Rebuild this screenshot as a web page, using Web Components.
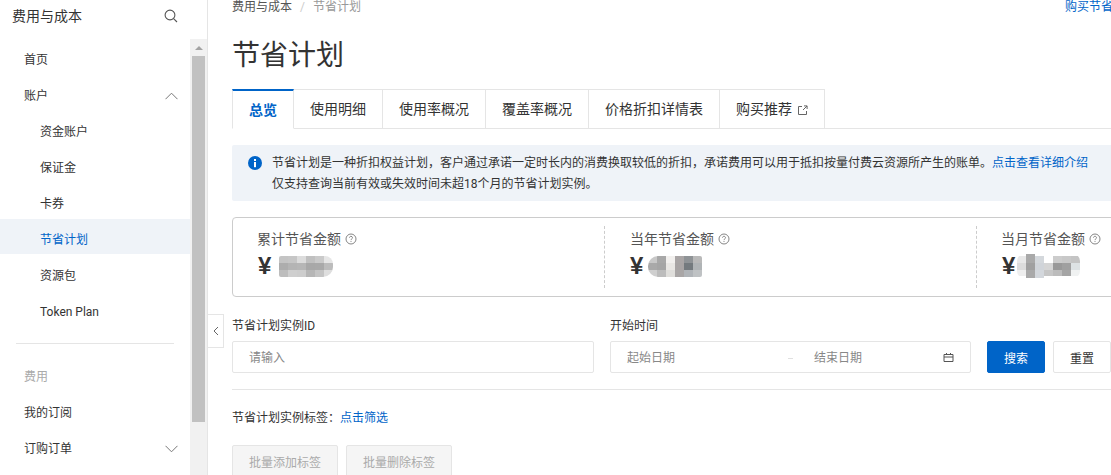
<!DOCTYPE html>
<html lang="zh">
<head>
<meta charset="utf-8">
<title>节省计划</title>
<style>
  html, body { margin: 0; height: 100%; overflow: hidden; background: #fff; }
  body { font-family: Roboto, "Noto Sans CJK SC", sans-serif; font-size: 12px; color: #333; }
</style>
</head>
<body>
<cost-app>
  <cost-sidebar slot="sidebar">
    <side-item>首页</side-item>
    <side-item chevron="up">账户</side-item>
    <side-item sub>资金账户</side-item>
    <side-item sub>保证金</side-item>
    <side-item sub>卡券</side-item>
    <side-item sub active>节省计划</side-item>
    <side-item sub>资源包</side-item>
    <side-item sub>Token Plan</side-item>
    <side-divider></side-divider>
    <side-item muted>费用</side-item>
    <side-item>我的订阅</side-item>
    <side-item chevron="down">订购订单</side-item>
  </cost-sidebar>

  <page-head></page-head>

  <tab-strip>
    <tab-item active>总览</tab-item>
    <tab-item>使用明细</tab-item>
    <tab-item>使用率概况</tab-item>
    <tab-item>覆盖率概况</tab-item>
    <tab-item>价格折扣详情表</tab-item>
    <tab-item external>购买推荐</tab-item>
  </tab-strip>

  <info-note>
    节省计划是一种折扣权益计划，客户通过承诺一定时长内的消费换取较低的折扣，承诺费用可以用于抵扣按量付费云资源所产生的账单。<a>点击查看详细介绍</a><br>
    仅支持查询当前有效或失效时间未超18个月的节省计划实例。
  </info-note>

  <stat-row>
    <stat-cell label="累计节省金额">
      <blur-amount style="margin-left:8px;border-radius:2px 8px 10px 2px" cols="6" rows="7 7 7" cells="#c4c4c4 #c6c6c6 #dcdcdc #c0c0c0 #cacaca #e6e6e6 #adadad #b4b4b4 #b6b6b6 #a8a8a8 #a9a9a9 #bcbcbc #bdbdbd #cfcfcf #cdcdcd #b6b6b6 #c4c4c4 #dedede"></blur-amount>
    </stat-cell>
    <stat-cell label="当年节省金额">
      <blur-amount style="margin-left:5px;border-radius:10px 2px 2px 10px" cols="6" rows="7 7 7" cells="#c8c8c8 #a8a8a8 #f2f0ee #a9a5a5 #8f9396 #b9b9b9 #a9a9a9 #a5a5a5 #e9e7e4 #a8a4a4 #747a7e #b0b4b6 #cfcfcf #bcbcbc #dfdedb #a9a6a6 #b0b4b8 #bfc2c4"></blur-amount>
    </stat-cell>
    <stat-cell label="当月节省金额">
      <blur-amount style="margin-left:2px" cols="7" rows="2 7 7 6 2" cells="t #a9a9a9 t t t t t #e8e8e8 #a9a9a9 #d4d8dc t #cccccc #c8c8c8 #c4c4c4 #dcdcdc #a0a0a0 #d0d4d9 #d5d5d5 #999999 #a0a0a0 #dde2e4 #eeeeee #a9a9a9 #d3d7dc #c6c6c6 #bcbcbc #a5a5a5 #f0f2f2 t #a9a9a9 #d3d7dc t t t t"></blur-amount>
    </stat-cell>
  </stat-row>

  <search-form></search-form>
  <tag-filter></tag-filter>

  <button-row>
    <action-button>批量添加标签</action-button>
    <action-button>批量删除标签</action-button>
  </button-row>
</cost-app>

<script>
  class ShadowBase extends HTMLElement {
    constructor() {
      super();
      this.attachShadow({ mode: "open" }).innerHTML =
        `<style>${this.constructor.css}</style>${this.constructor.markup}`;
    }
  }

  class CostApp extends ShadowBase {
    static css = `
      :host { display: flex; height: 475px; overflow: hidden; }
      .main { position: relative; flex: 1; min-width: 0; overflow: hidden; padding-left: 24px; }
      .content { width: 905px; }
      .collapse {
        position: absolute; left: 0; top: 314px; width: 15px; height: 32px;
        display: flex; align-items: center; justify-content: center;
        background: #fff; border: 1px solid #e5e5e5; border-left: 0;
      }
    `;
    static markup = `
      <slot name="sidebar"></slot>
      <div class="main">
        <div class="collapse">
          <svg width="6" height="10" viewBox="0 0 6 10" fill="none" stroke="#666"><path d="M5 1 1 5l4 4"/></svg>
        </div>
        <div class="content"><slot></slot></div>
      </div>
    `;
  }

  class CostSidebar extends ShadowBase {
    static css = `
      :host { display: flex; flex-direction: column; flex: none; width: 207px; height: 475px; border-right: 1px solid #e5e5e5; box-sizing: content-box; }
      .head { flex: none; height: 39px; display: flex; align-items: center; justify-content: space-between; padding: 0 29px 7px 12px; box-sizing: border-box; font-size: 14px; line-height: 20px; }
      .body { flex: 1; min-height: 0; display: flex; }
      .list { flex: 1; min-width: 0; padding-top: 3px; overflow: hidden; }
      .track { flex: none; width: 17px; background: #f1f1f1; padding: 0 2px; box-sizing: border-box; }
      .arrow { height: 17px; display: flex; align-items: center; justify-content: center; }
      .arrow i { width: 0; height: 0; border: 4px solid transparent; border-top: 0; border-bottom: 4px solid #a3a3a3; }
      .thumb { height: 366px; background: #c1c1c1; }
    `;
    static markup = `
      <div class="head">
        <span>费用与成本</span>
        <svg width="14" height="14" viewBox="0 0 14 14" fill="none" stroke="#555" stroke-width="1.1"><circle cx="6" cy="6" r="4.9"/><path d="m9.6 9.6 3.4 3.4"/></svg>
      </div>
      <div class="body">
        <div class="list"><slot></slot></div>
        <div class="track"><div class="arrow"><i></i></div><div class="thumb"></div></div>
      </div>
    `;
  }

  class SideItem extends ShadowBase {
    static css = `
      :host { display: flex; align-items: center; justify-content: space-between; height: 36px; padding: 0 12px 0 24px; line-height: 18px; color: #333; box-sizing: border-box; }
      :host([sub]) { padding-left: 40px; }
      :host([muted]) { color: #aaa; }
      :host([active]) { color: #0064c8; background: #eff3f8; height: 35px; margin: -3px 0 4px; padding-top: 6px; }
      svg { display: none; }
      :host([chevron]) svg { display: block; }
      :host([chevron="up"]) svg { transform: rotate(180deg); }
    `;
    static markup = `
      <span><slot></slot></span>
      <svg width="13" height="8" viewBox="0 0 13 8" fill="none" stroke="#777"><path d="m.5 .8 6 6 6-6"/></svg>
    `;
  }

  class SideDivider extends ShadowBase {
    static css = `:host { display: block; height: 1px; margin: 13px 16px 15px; background: #e5e5e5; }`;
    static markup = ``;
  }

  class PageHead extends ShadowBase {
    static css = `
      :host { display: block; }
      .crumbs { display: flex; height: 15px; line-height: 15px; color: #555; }
      .crumbs .sep { margin: 0 8px; color: #ccc; }
      .crumbs .here { color: #999; }
      .crumbs a { margin-left: auto; color: #0064c8; }
      h1 { margin: 0; padding-top: 21px; height: 74px; box-sizing: border-box; font-size: 28px; font-weight: 400; line-height: 40px; color: #333; }
    `;
    static markup = `
      <div class="crumbs"><span>费用与成本</span><span class="sep">/</span><span class="here">节省计划</span><a>购买节省计划</a></div>
      <h1>节省计划</h1>
    `;
  }

  class TabStrip extends ShadowBase {
    static css = `
      :host { display: block; border-bottom: 1px solid #e5e5e5; }
      .tabs { display: grid; grid-template-columns: 62px 89px 103px 103px 131px 105px; width: max-content; height: 39px; }
    `;
    static markup = `<div class="tabs"><slot></slot></div>`;
  }

  class TabItem extends ShadowBase {
    static css = `
      :host { display: flex; align-items: center; justify-content: center; gap: 5px; box-sizing: border-box; height: 40px; font-size: 14px; line-height: 20px; color: #333; border: 1px solid #e5e5e5; border-left: 0; background: #fff; }
      :host(:first-child) { border-left: 1px solid #e5e5e5; }
      :host([active]) { color: #0064c8; font-weight: 700; border-top: 2px solid #0064c8; border-bottom-color: #fff; }
      svg { display: none; }
      :host([external]) svg { display: block; margin-top: 2px; }
    `;
    static markup = `
      <slot></slot>
      <svg width="11" height="11" viewBox="0 0 11 11" fill="none" stroke="#666"><path d="M5 1.5H1.5v8h8V6M6 5l4-4M7 .9h3.1V4"/></svg>
    `;
  }

  class InfoNote extends ShadowBase {
    static css = `
      :host { display: flex; gap: 10px; margin-top: 16px; padding: 8px 16px 6px; height: 56px; box-sizing: border-box; background: #eff3f8; border-radius: 2px; line-height: 21px; color: #333; }
      svg { flex: none; margin-top: 3px; }
      ::slotted(a) { color: #0064c8; }
    `;
    static markup = `
      <svg width="14" height="14" viewBox="0 0 14 14"><circle cx="7" cy="7" r="7" fill="#0064c8"/><rect x="6" y="6" width="2" height="5.2" fill="#fff"/><rect x="6" y="3" width="2" height="2" fill="#fff"/></svg>
      <div><slot></slot></div>
    `;
  }

  class StatRow extends ShadowBase {
    static css = `
      :host { display: grid; grid-template-columns: 371px 372px 1fr; margin-top: 16px; padding: 8px 0; height: 80px; box-sizing: border-box; border: 1px solid #ccc; border-radius: 4px; }
    `;
    static markup = `<slot></slot>`;
  }

  class StatCell extends ShadowBase {
    static css = `
      :host { display: block; padding: 3px 0 0 25px; box-sizing: border-box; border-left: 1px dashed #ccc; }
      :host(:first-child) { border-left: 0; }
      .label { display: flex; align-items: center; gap: 4px; margin-left: -1px; font-size: 14px; line-height: 20px; color: #555; }
      :host(:nth-child(2)) .label { margin-left: 0; }
      .value { display: flex; align-items: center; margin-top: 5px; height: 24px; }
      .yen { font: 700 24px/24px "Liberation Sans", sans-serif; color: #333; }
    `;
    static markup = `
      <div class="label"><span class="text"></span>
        <svg width="12" height="12" viewBox="0 0 12 12" fill="none" stroke="#777" stroke-width=".9"><circle cx="6" cy="6" r="5"/><path d="M4.5 4.7C4.5 3.8 5.2 3.3 6 3.3s1.5.6 1.5 1.4c0 1.2-1.5 1.2-1.5 2.4M6 8.1v.9"/></svg>
      </div>
      <div class="value"><span class="yen">¥</span><slot></slot></div>
    `;
    connectedCallback() {
      this.shadowRoot.querySelector(".text").textContent = this.getAttribute("label");
    }
  }

  // masked amount, drawn as a mosaic like the screenshot
  class BlurAmount extends ShadowBase {
    static css = `
      :host { display: grid; border-radius: 7px; overflow: hidden; }
      span { display: block; }
    `;
    static markup = ``;
    connectedCallback() {
      const rows = this.getAttribute("rows").split(" ").map((h) => h + "px").join(" ");
      this.style.gridTemplateColumns = `repeat(${this.getAttribute("cols")}, 9px)`;
      this.style.gridTemplateRows = rows;
      for (const color of this.getAttribute("cells").split(" ")) {
        const cell = document.createElement("span");
        if (color !== "t") cell.style.background = color;
        this.shadowRoot.appendChild(cell);
      }
    }
  }

  class SearchForm extends ShadowBase {
    static css = `
      :host { display: block; margin-top: 20px; border-bottom: 1px solid #e5e5e5; padding-bottom: 16px; }
      .row { display: flex; align-items: flex-end; width: 879px; }
      .row > div:first-child { width: 362px; margin-right: 16px; }
      .row > div:nth-child(2) { width: 361px; margin-right: 16px; }
      button + button { margin-left: 8px; }
      label { display: block; line-height: 18px; margin-bottom: 6px; color: #333; }
      .box { display: flex; align-items: center; height: 32px; box-sizing: border-box; border: 1px solid #e5e5e5; border-radius: 2px; color: #888; line-height: 18px; }
      .box span { padding-top: 1px; }
      .text { padding-left: 16px; }
      .date { padding: 0 16px; }
      .date .dash { width: 5px; height: 1px; background: #e0e0e0; margin: 2px 21px 0 113px; }
      .date svg { margin-left: auto; }
      button { flex: none; height: 32px; width: 58px; padding: 0; font: inherit; border-radius: 2px; border: 1px solid #e5e5e5; background: #fff; color: #333; }
      button.primary { background: #0064c8; border-color: #0064c8; color: #fff; }
    `;
    static markup = `
      <div class="row">
        <div><label>节省计划实例ID</label><div class="box text"><span>请输入</span></div></div>
        <div><label>开始时间</label><div class="box date"><span>起始日期</span><i class="dash"></i><span>结束日期</span>
          <svg width="11" height="10" viewBox="0 0 11 10" fill="none" stroke="#555"><path d="M1 2.5h9v7H1zM1 5h9M3.5 1v2M7.5 1v2"/></svg></div></div>
        <button class="primary">搜索</button>
        <button>重置</button>
      </div>
    `;
  }

  class TagFilter extends ShadowBase {
    static css = `
      :host { display: block; margin-top: 19px; line-height: 18px; color: #333; }
      a { color: #0064c8; }
    `;
    static markup = `<span>节省计划实例标签：</span><a>点击筛选</a>`;
  }

  class ButtonRow extends ShadowBase {
    static css = `:host { display: flex; gap: 8px; margin-top: 18px; }`;
    static markup = `<slot></slot>`;
  }

  class ActionButton extends ShadowBase {
    static css = `
      :host { display: flex; align-items: center; justify-content: center; width: 106px; height: 32px; box-sizing: border-box; background: #f5f5f5; border: 1px solid #e5e5e5; border-radius: 2px; color: #aaa; }
    `;
    static markup = `<slot></slot>`;
  }

  customElements.define("cost-app", CostApp);
  customElements.define("cost-sidebar", CostSidebar);
  customElements.define("side-item", SideItem);
  customElements.define("side-divider", SideDivider);
  customElements.define("page-head", PageHead);
  customElements.define("tab-strip", TabStrip);
  customElements.define("tab-item", TabItem);
  customElements.define("info-note", InfoNote);
  customElements.define("stat-row", StatRow);
  customElements.define("stat-cell", StatCell);
  customElements.define("blur-amount", BlurAmount);
  customElements.define("search-form", SearchForm);
  customElements.define("tag-filter", TagFilter);
  customElements.define("button-row", ButtonRow);
  customElements.define("action-button", ActionButton);
</script>
</body>
</html>
